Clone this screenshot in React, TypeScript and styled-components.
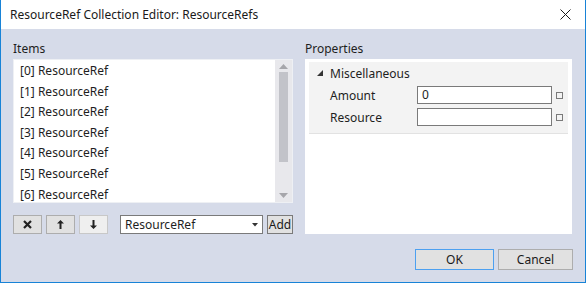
import styled, { createGlobalStyle } from "styled-components";

const GlobalStyle = createGlobalStyle`
  html, body { margin: 0; padding: 0; background: #ffffff; }
  body { font-family: "Segoe UI", "Noto Sans", sans-serif; font-size: 12px; color: #1e1e1e; }
  * { box-sizing: border-box; }
`;

const Window = styled.div`
  width: 586px;
  height: 283px;
  display: flex;
  flex-direction: column;
  border: 1px solid #1883d7;
  border-top: none;
  background: #d6dbe9;
`;

const TitleBar = styled.div`
  height: 29px;
  background: #ffffff;
  display: flex;
  align-items: center;
  justify-content: space-between;
  padding: 0 14px 0 9px;
  color: #1a1a1a;
  flex-shrink: 0;
`;

const Body = styled.div`
  flex: 1;
  display: flex;
  flex-direction: column;
  padding: 10px 12px 11px 12px;
`;

const Columns = styled.div`
  display: grid;
  grid-template-columns: 280px 267px;
  column-gap: 12px;
`;

const Column = styled.div`
  display: flex;
  flex-direction: column;
`;

const Label = styled.div`
  height: 20px;
  line-height: 20px;
`;

const ListBox = styled.div`
  height: 144px;
  background: #ffffff;
  border: 1px solid #eef0f4;
  display: flex;
`;

const ListItems = styled.div`
  flex: 1;
  padding: 1px 0 0 6px;
`;

const ListItem = styled.div`
  height: 20.6px;
  line-height: 20.6px;
`;

const ScrollBar = styled.div`
  width: 17px;
  background: #e8e8ec;
  display: flex;
  flex-direction: column;
  align-items: center;
  padding: 4px 0 4px;
`;

const Thumb = styled.div`
  width: 9px;
  flex: 1;
  margin: 3px 0 31px;
  background: #c2c3c9;
`;

const ButtonRow = styled.div`
  display: flex;
  align-items: center;
  margin-top: 12px;
  height: 19px;
`;

const IconButton = styled.button<{ $light?: boolean }>`
  width: 29px;
  height: 19px;
  margin-right: 4px;
  padding: 0;
  display: flex;
  align-items: center;
  justify-content: center;
  background: ${(p) => (p.$light ? "#efefef" : "#e1e1e1")};
  border: 1px solid ${(p) => (p.$light ? "#c8c8c8" : "#adadad")};
`;

const Combo = styled.div`
  margin-left: 8px;
  width: 143px;
  height: 19px;
  background: #ffffff;
  border: 1px solid #7a7a7a;
  display: flex;
  align-items: center;
  justify-content: space-between;
  padding: 0 4px 0 4px;
`;

const AddButton = styled.button`
  margin-left: 4px;
  width: 26px;
  height: 19px;
  padding: 0;
  font: inherit;
  color: #1a1a1a;
  background: #e1e1e1;
  border: 1px solid #7a7a7a;
`;

const PropPanel = styled.div`
  height: 175px;
  background: #ffffff;
  padding: 3px 4px 0 4px;
`;

const Grid = styled.div`
  background: #f3f3f3;
  border-bottom: 1px solid #e2e2e2;
  padding-bottom: 5px;
`;

const Row = styled.div`
  height: 22px;
  display: flex;
  align-items: center;
`;

const Caret = styled.div`
  width: 21px;
  display: flex;
  justify-content: flex-end;
  padding-right: 7px;
`;

const RowLabel = styled.div`
  width: 108px;
  padding-left: 21px;
`;

const Field = styled.div`
  width: 135px;
  height: 18px;
  background: #ffffff;
  border: 1px solid #7a7a7a;
  padding-left: 4px;
  line-height: 16px;
`;

const Marker = styled.div`
  width: 7px;
  height: 7px;
  margin-left: 4px;
  border: 1px solid #7a7a7a;
`;

const Footer = styled.div`
  margin-top: 15px;
  display: flex;
  justify-content: flex-end;
  gap: 4px;
`;

const DialogButton = styled.button<{ $primary?: boolean; $w: number }>`
  width: ${(p) => p.$w}px;
  height: 21px;
  padding: 0;
  font: inherit;
  color: #1a1a1a;
  background: #e1e1e1;
  border: 1px solid ${(p) => (p.$primary ? "#4da0f0" : "#adadad")};
`;

const items = [0, 1, 2, 3, 4, 5, 6];

export default function App() {
  return (
    <>
      <GlobalStyle />
      <Window>
        <TitleBar>
          <span>ResourceRef Collection Editor: ResourceRefs</span>
          <svg width="11" height="11" viewBox="0 0 11 11">
            <path d="M0.5 0.5 L10.5 10.5 M10.5 0.5 L0.5 10.5" stroke="#1a1a1a" strokeWidth="1" />
          </svg>
        </TitleBar>
        <Body>
          <Columns>
            <Column>
              <Label>Items</Label>
              <ListBox>
                <ListItems>
                  {items.map((i) => (
                    <ListItem key={i}>[{i}] ResourceRef</ListItem>
                  ))}
                </ListItems>
                <ScrollBar>
                  <svg width="9" height="5" viewBox="0 0 9 5">
                    <path d="M0 5 L4.5 0 L9 5 Z" fill="#a6a6ab" />
                  </svg>
                  <Thumb />
                  <svg width="9" height="5" viewBox="0 0 9 5">
                    <path d="M0 0 L4.5 5 L9 0 Z" fill="#a6a6ab" />
                  </svg>
                </ScrollBar>
              </ListBox>
              <ButtonRow>
                <IconButton>
                  <svg width="9" height="9" viewBox="0 0 9 9">
                    <path d="M1 1 L8 8 M8 1 L1 8" stroke="#222" strokeWidth="2.2" />
                  </svg>
                </IconButton>
                <IconButton>
                  <svg width="7" height="9" viewBox="0 0 7 9">
                    <path d="M3.5 0 L7 3.5 L4.5 3.5 L4.5 9 L2.5 9 L2.5 3.5 L0 3.5 Z" fill="#222" />
                  </svg>
                </IconButton>
                <IconButton $light>
                  <svg width="7" height="9" viewBox="0 0 7 9">
                    <path d="M3.5 9 L7 5.5 L4.5 5.5 L4.5 0 L2.5 0 L2.5 5.5 L0 5.5 Z" fill="#222" />
                  </svg>
                </IconButton>
                <Combo>
                  <span>ResourceRef</span>
                  <svg width="6" height="4" viewBox="0 0 6 4">
                    <path d="M0 0 L6 0 L3 3.5 Z" fill="#333" />
                  </svg>
                </Combo>
                <AddButton>Add</AddButton>
              </ButtonRow>
            </Column>
            <Column>
              <Label>Properties</Label>
              <PropPanel>
                <Grid>
                  <Row>
                    <Caret>
                      <svg width="6" height="6" viewBox="0 0 6 6">
                        <path d="M6 0 L6 6 L0 6 Z" fill="#333" />
                      </svg>
                    </Caret>
                    <span>Miscellaneous</span>
                  </Row>
                  <Row>
                    <RowLabel>Amount</RowLabel>
                    <Field>0</Field>
                    <Marker />
                  </Row>
                  <Row>
                    <RowLabel>Resource</RowLabel>
                    <Field />
                    <Marker />
                  </Row>
                </Grid>
              </PropPanel>
            </Column>
          </Columns>
          <Footer>
            <DialogButton $primary $w={79}>OK</DialogButton>
            <DialogButton $w={75}>Cancel</DialogButton>
          </Footer>
        </Body>
      </Window>
    </>
  );
}
